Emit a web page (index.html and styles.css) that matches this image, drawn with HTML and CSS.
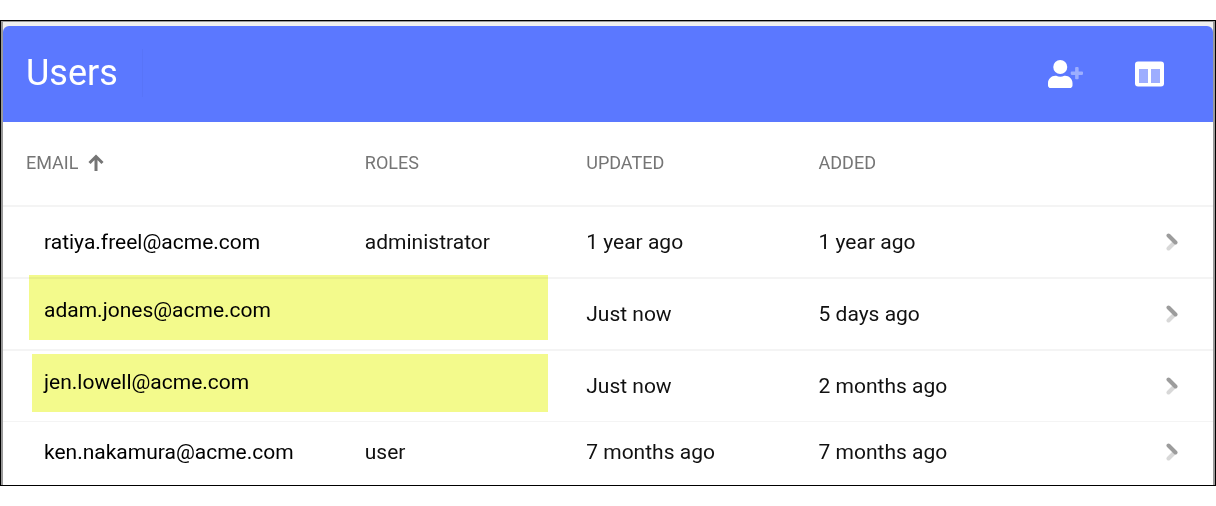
FILE: index.html
```html
<!DOCTYPE html>
<html lang="en">
<head>
  <meta charset="UTF-8" />
  <meta name="viewport" content="width=device-width, initial-scale=1" />
  <title>Users</title>
  <link rel="stylesheet" href="styles.css">
</head>
<body>
  <svg class="sprite" aria-hidden="true">
    <symbol id="chevron" viewBox="0 0 12 18">
      <path d="M2.500 15.500L8.500 9.500" stroke="#d8d8d8" stroke-width="4" stroke-linecap="round" />
      <path d="M2.500 2.500L9.500 9.500" stroke="#9c9c9c" stroke-width="4" stroke-linecap="round" />
    </symbol>
  </svg>

  <main class="frame">
    <div class="panel">
      <header class="toolbar">
        <h1>Users</h1>
        <div class="actions">
          <button type="button" aria-label="Add user">
            <svg width="35" height="28" viewBox="0 0 640 512" fill="#fff">
              <circle cx="224" cy="128" r="128" />
              <path d="M313.600 288h-16.700c-22.200 10.200-46.900 16-72.900 16s-50.600-5.800-72.900-16h-16.700C60.200 288 0 348.200 0 422.400V464c0 26.500 21.500 48 48 48h352c26.500 0 48-21.500 48-48v-41.600c0-74.200-60.200-134.400-134.400-134.400z" />
              <path opacity=".4" d="M624 208h-64v-64c0-8.800-7.200-16-16-16h-32c-8.800 0-16 7.200-16 16v64h-64c-8.800 0-16 7.200-16 16v32c0 8.800 7.200 16 16 16h64v64c0 8.800 7.200 16 16 16h32c8.800 0 16-7.200 16-16v-64h64c8.800 0 16-7.200 16-16v-32c0-8.800-7.200-16-16-16z" />
            </svg>
          </button>
          <button type="button" aria-label="Columns">
            <svg width="29" height="28" viewBox="0 0 29 28">
              <rect x="0" y="1.500" width="29" height="25" rx="3" fill="#fff" />
              <path d="M4 9h9v14H4zM16 9h9v14h-9z" fill="#9dadff" />
            </svg>
          </button>
        </div>
      </header>

      <table class="users">
        <colgroup>
          <col class="col-email">
          <col class="col-roles">
          <col class="col-updated">
          <col>
          <col class="col-open">
        </colgroup>
        <thead>
          <tr>
            <th aria-sort="ascending">
              <button type="button" class="sort">EMAIL
                <svg width="16" height="18" viewBox="0 0 16 18" fill="none" stroke="#757575" stroke-width="3">
                  <path d="M8 17V3M1.500 9L8 2.500L14.500 9" />
                </svg>
              </button>
            </th>
            <th>ROLES</th>
            <th>UPDATED</th>
            <th>ADDED</th>
            <th></th>
          </tr>
        </thead>
        <tbody>
          <tr>
            <td class="email">ratiya.freel@acme.com</td>
            <td>administrator</td>
            <td>1 year ago</td>
            <td>1 year ago</td>
            <td class="open"><button type="button" aria-label="Open ratiya.freel"><svg width="12" height="18"><use href="#chevron" /></svg></button></td>
          </tr>
          <tr class="marked marked-tall">
            <td class="email">adam.jones@acme.com</td>
            <td></td>
            <td>Just now</td>
            <td>5 days ago</td>
            <td class="open"><button type="button" aria-label="Open adam.jones"><svg width="12" height="18"><use href="#chevron" /></svg></button></td>
          </tr>
          <tr class="marked">
            <td class="email">jen.lowell@acme.com</td>
            <td></td>
            <td>Just now</td>
            <td>2 months ago</td>
            <td class="open"><button type="button" aria-label="Open jen.lowell"><svg width="12" height="18"><use href="#chevron" /></svg></button></td>
          </tr>
          <tr class="last">
            <td class="email">ken.nakamura@acme.com</td>
            <td>user</td>
            <td>7 months ago</td>
            <td>7 months ago</td>
            <td class="open"><button type="button" aria-label="Open ken.nakamura"><svg width="12" height="18"><use href="#chevron" /></svg></button></td>
          </tr>
        </tbody>
      </table>
    </div>
  </main>
</body>
</html>
```
FILE: styles.css
```css
* { box-sizing: border-box; }
body { margin: 20px 0; background: #fff; color: #111; font-family: Roboto, sans-serif; }
button { padding: 0; border: 0; background: none; color: inherit; font: inherit; cursor: pointer; }
svg { display: block; }
.sprite { position: absolute; width: 0; height: 0; }

/* black outer line with a grey bevel inside */
.frame { border: 1px solid #000; }
.panel { padding-top: 4px; border: solid #999; border-width: 1px 2px 0; background: #f0f0f0; }

.toolbar { display: flex; align-items: center; height: 96px; padding: 0 49px 2px 23px; background: #5b78ff; border-radius: 6px 6px 0 0; color: #fff; }
.toolbar h1 { margin: 0; padding-right: 24px; border-right: 1px solid #5874f8; font-size: 36px; font-weight: 400; line-height: 48px; }
.actions { display: flex; gap: 52px; margin-left: auto; padding-top: 2px; }

.users { width: 100%; border-collapse: separate; border-spacing: 0; table-layout: fixed; background: #fff; }
.col-email { width: 28%; }
.col-roles { width: 18.3%; }
.col-updated { width: 19.2%; }
.col-open { width: 80px; }

th, td { padding: 0 0 0 23px; border-bottom: 2px solid #f4f4f4; text-align: left; white-space: nowrap; }
th { height: 85px; padding-bottom: 2px; color: #757575; font-size: 18px; font-weight: 400; }
td { height: 72px; font-size: 21px; line-height: 24px; }
.sort { display: flex; align-items: center; gap: 10px; }
.email { padding-left: 41px; color: #000; }
.open { padding: 0 35px 0 0; }
.open button { display: block; margin-left: auto; }
.last td { height: 63px; padding-bottom: 4px; border-top: 0; border-bottom: 0; }

/* highlighted users */
.marked { position: relative; }
.marked .email { padding-bottom: 8px; }
.marked .email::after { content: ""; position: absolute; top: 3px; left: 29px; right: 55%; height: 58px; background: #f3fa8c; mix-blend-mode: multiply; }
.marked-tall .email::after { top: -4px; left: 26px; height: 65px; }
.marked:not(.marked-tall) td { height: 71px; border-bottom-width: 1px; }
```
